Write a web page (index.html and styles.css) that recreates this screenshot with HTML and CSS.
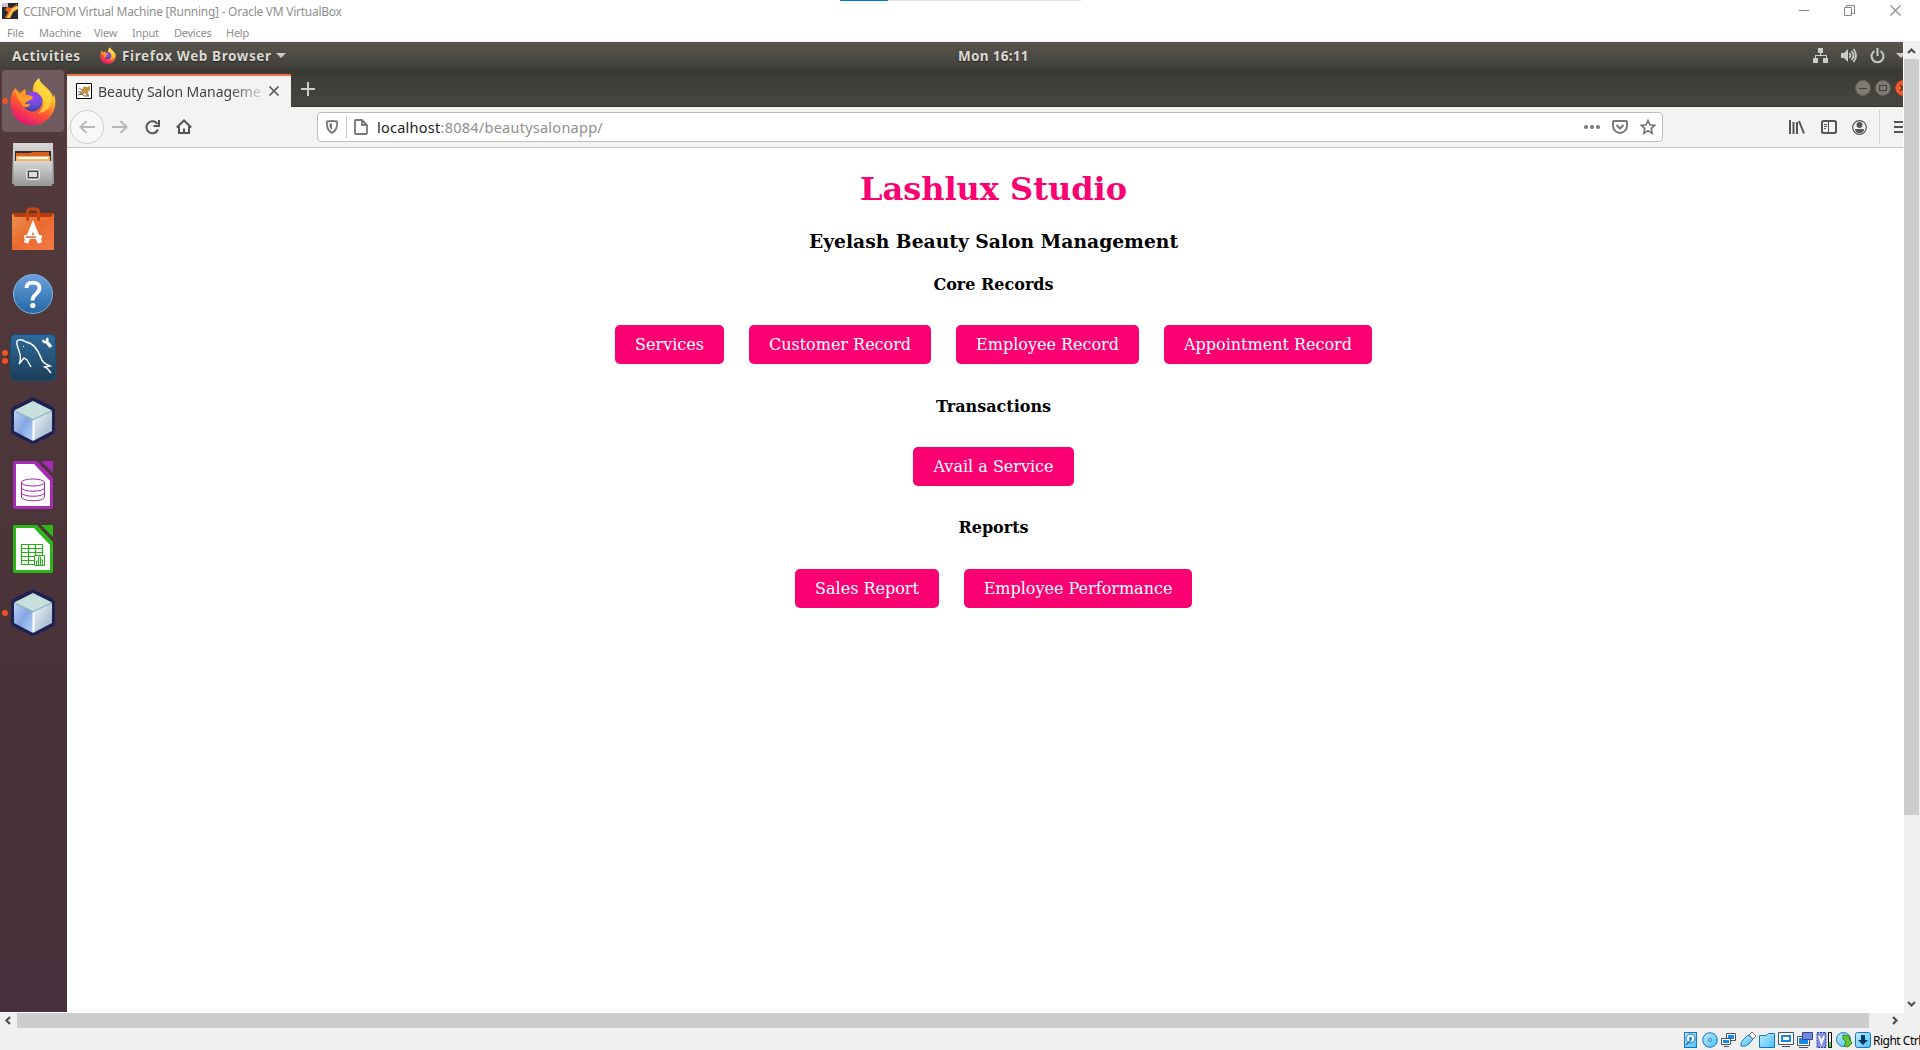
FILE: index.html
```html
<!DOCTYPE html>
<html lang="en">
<head>
<meta charset="utf-8">
<title>CCINFOM Virtual Machine</title>
<link rel="stylesheet" href="styles.css">
</head>
<body>
<svg class="defs" width="0" height="0" aria-hidden="true">
  <defs>
    <linearGradient id="fire" x1="0.8" y1="0" x2="0.3" y2="1"><stop offset="0" stop-color="#fff44f"/><stop offset=".35" stop-color="#ffb52a"/><stop offset=".62" stop-color="#ff5a2e"/><stop offset="1" stop-color="#e4107a"/></linearGradient>
    <radialGradient id="globe" cx=".6" cy=".25" r=".8"><stop offset="0" stop-color="#a13df0"/><stop offset=".5" stop-color="#6e50d8"/><stop offset="1" stop-color="#3d3aa0"/></radialGradient>
    <linearGradient id="steel" x1="0" y1="0" x2="0" y2="1"><stop offset="0" stop-color="#d8d8d8"/><stop offset="1" stop-color="#979797"/></linearGradient>
    <linearGradient id="bag" x1="0" y1="0" x2="1" y2="1"><stop offset="0" stop-color="#e8934f"/><stop offset=".5" stop-color="#ec6a2f"/><stop offset="1" stop-color="#f07c45"/></linearGradient>
    <linearGradient id="help" x1="0" y1="0" x2="0" y2="1"><stop offset="0" stop-color="#6ca0dc"/><stop offset="1" stop-color="#2268a6"/></linearGradient>
    <linearGradient id="sql" x1="0" y1="0" x2="0" y2="1"><stop offset="0" stop-color="#2f6a9c"/><stop offset="1" stop-color="#1c3e58"/></linearGradient>
    <linearGradient id="cubeL" x1="0" y1="0" x2="1" y2="1"><stop offset="0" stop-color="#bcd2f4"/><stop offset=".5" stop-color="#86a6e2"/><stop offset="1" stop-color="#b4d6fa"/></linearGradient>
    <linearGradient id="cubeR" x1="0" y1="0" x2="1" y2="1"><stop offset="0" stop-color="#f2f8fc"/><stop offset=".5" stop-color="#c3d2dc"/><stop offset="1" stop-color="#97aed0"/></linearGradient>
    <linearGradient id="aqua" x1="0" y1="0" x2="1" y2="1"><stop offset="0" stop-color="#c4ecff"/><stop offset="1" stop-color="#48c0fa"/></linearGradient>
    <symbol id="firefox" viewBox="0 0 46 47">
      <path fill="url(#fire)" d="M5 10l5 5 5-4 1 5 7-1c-1-6 1-11 6-15 1 7 12 10 14 19 1-1 1-2 1-3 3 9 1 17-4 23-9 11-27 11-35 0C-1 31-1 17 5 10z"/>
      <circle cx="22.500" cy="23.500" r="10" fill="url(#globe)"/>
      <path fill="#ff9a26" d="M5 11l5 5 5-4 1 5c6 0 8 2 6 4-3 2-6 2-7 5 2 0 4-1 5 1-3 4-8 2-9-2-3-3-5-7-6-14z"/>
      <path fill="#ffd83c" opacity=".8" d="M29 1c-6 9-3 12 2 17 5 6 2 14-3 17 9 0 15-8 13-17-2-6-9-9-12-17z"/>
    </symbol>
    <symbol id="cube" viewBox="0 0 46 48">
      <path fill="#202153" d="M20 1.500q3-2 6 0l16 8q3 1 3 4v20q0 3-3 4.500l-16 8q-3 2-6 0l-16-8q-3-1.500-3-4.500v-20q0-3 3-4z"/>
      <path fill="#c7e0dc" d="M23 4l19 9.500L23 23 4 13.500z"/>
      <path fill="url(#cubeL)" d="M4 14l19 9v21L4 34z"/>
      <path fill="url(#cubeR)" d="M42 14l-19 9v21l19-10z"/>
      <path fill="none" stroke="#8fc0cc" stroke-width="1.200" d="M5 14l18 8.500L41 14"/>
      <path stroke="#fff" stroke-width="2" d="M23.500 24v19"/>
    </symbol>
    <symbol id="file" viewBox="0 0 40 48"><path fill="currentColor" d="M1 0h23l16 17v29q0 2-2 2H2q-2 0-2-2V1z"/><path fill="#fff" d="M3 3h18l16 17v25H3z"/><path fill="currentColor" d="M28 0h12v12z"/></symbol>
  </defs>
</svg>

<header class="titlebar">
  <svg class="vm-logo" viewBox="0 0 16 16"><path fill="#2a2a35" d="M0 0h16v16H0z"/><path fill="#c5cad2" d="M0 0h6v4H0z"/><path fill="#e96b17" d="M5 4l5 1 5-4v4l-5 4-3 6H3l3-6-3-2z"/><path fill="#ffc451" d="M10 5l6-2v3l-5 3-3 6H5l3-6z"/></svg>
  <span class="title">CCINFOM Virtual Machine [Running] - Oracle VM VirtualBox</span>
  <div class="win-buttons">
    <svg width="10" height="11"><path d="M0 5.500h10" stroke="#888"/></svg>
    <svg width="11" height="11" fill="none" stroke="#888"><path d="M.5 2.500h7v8h-7zM2.500 2.500v-2h8v8h-3"/></svg>
    <svg width="11" height="11" stroke="#888" stroke-width="1.100"><path d="M.5.500l10 10M10.500.500l-10 10"/></svg>
  </div>
  <div class="progress"></div>
</header>
<nav class="menubar">
  <span class="m-file">File</span><span class="m-machine">Machine</span><span class="m-view">View</span><span class="m-input">Input</span><span class="m-devices">Devices</span><span>Help</span>
</nav>

<div class="viewport">
  <div class="guest">
    <div class="topbar">
      <span class="activities">Activities</span>
      <svg class="ff-small"><use href="#firefox"/></svg>
      <span class="app">Firefox Web Browser</span>
      <svg class="caret" viewBox="0 0 10 5"><path fill="#ccc" d="M0 0h10L5 5z"/></svg>
      <span class="clock">Mon 16:11</span>
      <div class="tray">
        <svg width="16" height="16" fill="#ccc"><path d="M5 0h5v5H5zM7 5h1v3H7zM2 7h12v1H2zM2 7h1v3H2zM13 7h1v3h-1zM0 10h5v5H0zM10 10h5v5h-5z"/></svg>
        <svg width="17" height="16"><path fill="#ccc" d="M0 5h3l4-4v13l-4-4H0z"/><path fill="none" stroke="#ccc" stroke-width="1.700" d="M8.500 5q2 2.500 0 5M10.500 3q4 4.500 0 9M12.500 1q5 6.500 0 13"/></svg>
        <svg width="16" height="16" fill="none" stroke="#ccc" stroke-width="2"><path d="M4.500 3a6 6 0 1 0 6 0M7.500 0v8"/></svg>
        <svg width="10" height="6"><path fill="#ccc" d="M0 0h10L5 5z"/></svg>
      </div>
    </div>
    <div class="desktop">
      <aside class="dock">
        <div class="app-tile active"><i class="dots one"></i><svg width="46" height="47"><use href="#firefox"/></svg></div>
        <div class="app-tile"><svg width="42" height="44" viewBox="0 0 42 44"><path fill="url(#steel)" d="M1 0h40v5l1 36H0L1 5z"/><path fill="#332b27" d="M3 8h36v10H3z"/><path fill="#d85f22" d="M4 10h15l1-1h17v9H4z"/><path fill="#ffb45c" d="M4 13h34v5H4z"/><path fill="#fff" d="M6 14h30v2H6z"/><path fill="url(#steel)" d="M2 18h38v25H2z"/><path fill="none" stroke="#d5d5d5" d="M3 18.500h36"/><rect x="14.500" y="26.500" width="13" height="10" rx="2" fill="#9a9a9a" stroke="#eee"/><path fill="#ddd" stroke="#444" d="M16.500 28.500h9v6h-9z"/></svg></div>
        <div class="app-tile"><svg width="42" height="44" viewBox="0 0 42 44"><path fill="#b73b0d" d="M1 6h40v6H1z"/><path fill="url(#bag)" d="M0 6l3 4h36l3-4v37H0z"/><path fill="none" stroke="#c84512" stroke-width="3" d="M15.500 14V5q0-3 3-3h5q3 0 3 3v9"/><path fill="none" stroke="#fff" stroke-width="4.500" d="M14 36l7-17 7 17"/><rect x="12" y="28" width="18" height="4" rx="1" fill="#fff"/><path fill="#eb6128" d="M13.500 29.300H24v1.500H13.500z"/></svg></div>
        <div class="app-tile help"><svg width="42" height="42"><circle cx="21" cy="21" r="19.500" fill="url(#help)" stroke="#7cb3e6"/><path fill="none" stroke="#fff" stroke-width="3.800" d="M14.500 15q0-5 6-5.300 7-.2 7 5.300 0 3.300-4 6.500-3 2.500-3 6"/><circle cx="20.800" cy="32.500" r="2.600" fill="#fff"/></svg></div>
        <div class="app-tile"><i class="dots two"></i><svg width="46" height="47"><rect x=".5" y=".5" width="45" height="46" rx="5" fill="url(#sql)" stroke="#1c4d76"/><path fill="none" stroke="#fff" stroke-width="1.400" d="M21 33l-4-7-3-2-5 6c2-4 2-8 0-13-1-4-3-7-2-10 2-2 6-1 9 1 7 1 12 8 15 16 1 4 4 6 9 8l-5 1c3 1 4 4 6 6"/><path d="M13.500 12v1" stroke="#fff"/><path stroke="#fff" stroke-width="3.500" d="M36 7l5 6"/><path fill="none" stroke="#fff" stroke-width="2.400" d="M33 6q1 3 3 2 2-1 1-4"/></svg></div>
        <div class="app-tile"><svg width="46" height="48"><use href="#cube"/></svg></div>
        <div class="app-tile base"><svg width="40" height="48"><use href="#file"/><g fill="none" stroke="#a02bb0"><ellipse cx="20" cy="21.500" rx="11.500" ry="3.500"/><path d="M8.500 21.500V36c0 5 23 5 23 0V21.500M8.500 26.500c0 5 23 5 23 0M8.500 31.500c0 5 23 5 23 0"/></g></svg></div>
        <div class="app-tile calc"><svg width="40" height="48"><use href="#file"/><path fill="none" stroke="#2aaf1a" stroke-width="1.200" d="M8.500 19.500h21v20h-21zM8.500 23.500h21M8.500 27.500h21M8.500 31.500h21M8.500 35.500h21M15.500 19.500v20M22.500 19.500v20"/><path fill="#fff" stroke="#2aaf1a" d="M21.500 30.500h10v10h-10z"/><path fill="none" stroke="#2aaf1a" d="M23.500 40v-4h2v4v-8h2v8v-5h2v5"/></svg></div>
        <div class="app-tile"><i class="dots one"></i><svg width="46" height="48"><use href="#cube"/></svg></div>
      </aside>
      <section class="browser">
        <div class="tabstrip">
          <div class="tab">
            <svg class="favicon" width="16" height="16"><path fill="#fff" stroke="#000" d="M.5.500h15v15H.5z"/><path fill="#c4913f" d="M8 3l2 1h2l2-1v4l-2 2 1 4h-2l-2-3-3 2H3l3-5z"/><path stroke="#666" fill="none" d="M2 12l4-1 2 2h5M3 5l3 2M2 9h3"/></svg>
            <span class="tab-title">Beauty Salon Manageme</span>
            <svg width="10" height="10" stroke="#555" stroke-width="1.600"><path d="M.5.500l9 9M9.500.500l-9 9"/></svg>
          </div>
          <svg class="new-tab" width="14" height="14"><path stroke="#ccc" stroke-width="2" d="M7 0v14M0 7h14"/></svg>
          <div class="ctl">
            <svg width="16" height="16"><circle cx="8" cy="8" r="7.500" fill="#7d7b74"  stroke="#64625b"/><path stroke="#3c3b37" d="M4 8.500h8"/></svg>
            <svg width="16" height="16"><circle cx="8" cy="8" r="7.500" fill="#7d7b74" stroke="#64625b"/><path fill="none" stroke="#3c3b37" d="M4.500 5.500h7v5h-7z"/></svg>
            <svg width="16" height="16"><circle cx="8" cy="8" r="7.500" fill="#f05d33" stroke="#c9431d"/><path stroke="#5b2414" stroke-width="1.300" d="M5 5l6 6M11 5l-6 6"/></svg>
          </div>
        </div>
        <div class="toolbar">
          <span class="back"><svg width="16" height="14" fill="none" stroke="#b9b8b7" stroke-width="2"><path d="M16 7H1M7.500 1L1.500 7l6 6"/></svg></span>
          <svg class="fwd" width="16" height="14" fill="none" stroke="#b9b8b7" stroke-width="2"><path d="M0 7h15M8.500 1l6 6-6 6"/></svg>
          <svg class="reload" width="16" height="15" fill="none" stroke="#555" stroke-width="2"><path d="M12.500 4A6 6 0 1 0 13 9.500M8.500 6h5.500V0"/></svg>
          <svg class="home" width="16" height="16" fill="none" stroke="#555" stroke-width="2"><path d="M.8 8.500L8 1.500l7.200 7M3 7.500V14h10V7.500M8 14.500v-5"/></svg>
          <div class="urlbar">
            <svg width="12" height="14"><path fill="none" stroke="#777" stroke-width="1.800" d="M1 1.500q5-1 10 0 1 8-5 11.500-6-3.500-5-11.500z"/><path fill="#777" d="M3.500 3.500H6V10Q3 8 3.500 3.500z"/></svg>
            <i class="sep"></i>
            <svg width="14" height="16"><path fill="none" stroke="#777" stroke-width="1.800" d="M1 2q0-1 1-1h6l5 5v8q0 1-1 1H2q-1 0-1-1zM8 1v5h5"/></svg>
            <span class="url"><b>localhost</b>:8084/beautysalonapp/</span>
            <svg class="more" width="16" height="4" fill="#777"><circle cx="2" cy="2" r="2"/><circle cx="8" cy="2" r="2"/><circle cx="14" cy="2" r="2"/></svg>
            <svg class="pocket" width="16" height="14" fill="none" stroke="#777" stroke-width="2"><path d="M2 1h12q1 0 1 1v4q-.5 6-7 7-6.500-1-7-7V2q0-1 1-1zM4.500 5L8 8.500 11.500 5"/></svg>
            <svg class="star" width="16" height="16" fill="none" stroke="#777" stroke-width="1.700"><path d="M8 1.500l2 4.300 4.700.5-3.500 3.200 1 4.700L8 11.800l-4.200 2.400 1-4.700L1.300 6.300 6 5.800z"/></svg>
          </div>
          <div class="tools">
            <svg width="16" height="14" stroke="#555" stroke-width="2"><path d="M1 0v14M4.500 2v12M8 2v12M10 1l5 12.500"/></svg>
            <svg width="16" height="14" fill="none" stroke="#555"><rect x="1" y="1" width="14" height="12" rx="1.500" stroke-width="2"/><path d="M7.500 2v10M3 4.500h3M3 6.500h3M3 8.500h2"/></svg>
            <svg width="15" height="15"><circle cx="7.500" cy="7.500" r="6.800" fill="none" stroke="#555" stroke-width="1.200"/><circle cx="7.500" cy="5" r="3" fill="#555"/><path fill="#555" d="M3 9h9q0 4-4.500 4T3 9z"/></svg>
            <i class="divider"></i>
            <svg width="16" height="12" stroke="#555" stroke-width="2"><path d="M0 1h14M0 6h14M0 11h14"/></svg>
          </div>
        </div>
        <main class="page">
          <h1>Lashlux Studio</h1>
          <h3>Eyelash Beauty Salon Management</h3>
          <h4>Core Records</h4>
          <div class="row"><a class="btn w-services">Services</a><a class="btn w-customer">Customer Record</a><a class="btn w-employee">Employee Record</a><a class="btn w-appointment">Appointment Record</a></div>
          <h4>Transactions</h4>
          <div class="row middle"><a class="btn w-avail">Avail a Service</a></div>
          <h4 class="last">Reports</h4>
          <div class="row"><a class="btn w-sales">Sales Report</a><a class="btn w-performance">Employee Performance</a></div>
        </main>
      </section>
    </div>
  </div>
  <div class="vscroll">
    <svg width="15" height="17" fill="none" stroke="#505050" stroke-width="2.200"><path d="M4 11l3.500-3.500L11 11"/></svg>
    <div class="vthumb"></div>
    <svg class="down" width="15" height="17" fill="none" stroke="#505050" stroke-width="2.200"><path d="M4 6l3.500 3.500L11 6"/></svg>
  </div>
</div>
<div class="hscroll">
  <svg width="17" height="15" fill="none" stroke="#505050" stroke-width="2.200"><path d="M10 4L6.500 7.500 10 11"/></svg>
  <div class="hthumb"></div>
  <svg class="right" width="17" height="15" fill="none" stroke="#505050" stroke-width="2.200"><path d="M7 4l3.500 3.500L7 11"/></svg>
</div>
<footer class="statusbar">
  <svg width="16" height="16"><rect x="1.500" y=".5" width="12" height="15" fill="url(#aqua)" stroke="#1675c6"/><circle cx="7.500" cy="6.500" r="4.500" fill="#e9f8ff" stroke="#1675c6"/><circle cx="7.500" cy="6.500" r="1.500" fill="#1675c6"/><path stroke="#1675c6" stroke-width="1.500" d="M3 13l5-5"/></svg>
  <svg width="16" height="16"><circle cx="8" cy="8" r="7.300" fill="url(#aqua)" stroke="#1675c6"/><circle cx="8" cy="8" r="1.500" fill="#fff" stroke="#1675c6"/></svg>
  <svg width="16" height="16" stroke="#445064"><path fill="#fff" d="M5.500 1.500h9v7h-9z"/><path fill="#1688e8" stroke="none" d="M7 3h6v4H7z"/><path fill="#fff" d="M.5 6.500h9v6h-9zM3 14.500h5"/><path fill="#1688e8" stroke="none" d="M2 8h6v3H2z"/></svg>
  <svg width="16" height="16"><path fill="url(#aqua)" stroke="#1675c6" d="M1 14q-1-4 3-7l4-4 5 4-4 5q-3 3-8 2z"/><path fill="#fff" stroke="#777" d="M9 3l3-3 4 4-3 3z"/></svg>
  <svg width="16" height="16"><path fill="url(#aqua)" stroke="#1675c6" d="M.5 15.500v-12h7l2-2h6v14z"/></svg>
  <svg width="16" height="16"><path fill="#fff" stroke="#445064" d="M.5.500h15v12h-15zM4 14.500h8"/><path fill="#fff" stroke="#1688e8" stroke-width="2" d="M4 4h8v5H4z"/></svg>
  <svg width="16" height="16"><path fill="#fff" stroke="#445064" d="M.5 4.500h12v9H.500zM2 15.500h9"/><path fill="#1688e8" d="M2 6h9v6H2z"/><path fill="#7288dd" stroke="#3344a0" d="M5.500.5h10v7h-10z"/></svg>
  <svg width="17" height="16"><path fill="#7f91e2" stroke="#303c9a" stroke-dasharray="2 1" d="M1 .5h9v15H1z"/><path fill="none" stroke="#fff" stroke-width="2" d="M3 4l2.500 7L8 4"/><path stroke="#000" fill="#fff" d="M12.500.5h3v15h-3z"/><path fill="#3fe41a" d="M13 10h2v5h-2z"/></svg>
  <svg width="16" height="16"><circle cx="7.500" cy="7.500" r="7" fill="url(#aqua)" stroke="#1675c6"/><path fill="#69c431" stroke="#2a8922" d="M7 3l6 1 1 4 2 3-4 4-4-1 2-4-3-3z"/></svg>
  <svg width="16" height="16"><rect x=".5" y=".5" width="15" height="15" rx="2" fill="url(#aqua)" stroke="#1675c6"/><path fill="#073b63" d="M6 3h4v5h3l-5 5-5-5h3z"/></svg>
  <span class="hostkey">Right Ctrl</span>
</footer>
</body>
</html>
```
FILE: styles.css
```css
* { box-sizing: border-box; }
body { margin: 0; width: 1920px; height: 1050px; overflow: hidden; display: flex; flex-direction: column; background: linear-gradient(#fff 1013px, #f0f0f0 1013px); font-family: "Noto Sans", sans-serif; }
svg { display: block; flex: none; overflow: visible; }
.defs { position: absolute; }
span { white-space: nowrap; }

.titlebar { position: relative; height: 24px; flex: none; display: flex; align-items: center; padding: 0 19px 0 2px; color: #8f8f8f; font-size: 12px; }
.vm-logo { width: 16px; height: 16px; margin: 0 5px 2px 0; }
.title { font-size: 12px; letter-spacing: -.26px; padding-bottom: 1px; }
.win-buttons { margin-left: auto; display: flex; gap: 35px; align-items: center; padding-bottom: 4px; }
.progress { position: absolute; left: 840px; top: 0; width: 241px; height: 1px; background: linear-gradient(90deg, #0078d7 48px, #e2e2e2 48px); }
.menubar { height: 18px; flex: none; display: flex; align-items: center; padding: 0 0 1px 7px; border-bottom: 1px solid #f0f0f0; color: #8f8f8f; font-size: 11px; letter-spacing: -.25px; }
.m-file { width: 32px; } .m-machine { width: 55px; } .m-view { width: 38px; } .m-input { width: 42px; } .m-devices { width: 52px; }

.viewport { height: 971px; flex: none; display: flex; }
.guest { width: 1903px; height: 970px; overflow: hidden; flex: none; display: flex; flex-direction: column; }
.topbar { height: 27px; flex: none; display: flex; align-items: center; padding-left: 12px; background: linear-gradient(#59564e, #403f3a); color: #dcd9d3; font-size: 13.500px; font-weight: 700; text-shadow: 0 1px 1px #222; }
.activities { width: 88px; letter-spacing: .6px; }
.ff-small { width: 16px; height: 17px; margin: 0 6px 1px 0; }
.app { width: 154px; letter-spacing: .6px; }
.caret { width: 10px; height: 5px; }
.clock { width: 90px; margin-left: 672px; letter-spacing: .3px; }
.tray { margin-left: auto; display: flex; align-items: center; gap: 12px; margin-right: -3px; }
.tray svg:last-child { margin-left: -2px; }

.desktop { width: 1920px; flex: 1; display: flex; min-height: 0; }
.dock { width: 67px; flex: none; display: flex; flex-direction: column; gap: 2px; padding: 1px 2px; background: linear-gradient(#543a3c, #4b3539 50%, #45303b); }
.app-tile { position: relative; width: 62px; height: 62px; flex: none; display: flex; align-items: center; justify-content: center; border-radius: 4px; }
.active { background: #705c5e; }
.help { padding-top: 2px; }
.base { color: #a52bb5; } .calc { color: #2db51c; }
.dots { position: absolute; left: 0; top: 28px; width: 6px; height: 6px; border-radius: 50%; background: #e95420; }
.two { top: 24px; box-shadow: 0 8px #e95420; }

.browser { width: 1853px; flex: none; display: flex; flex-direction: column; background: #fff; }
.tabstrip { height: 38px; flex: none; display: flex; align-items: center; background: linear-gradient(#3a3934, #474640); border-bottom: 1px solid #33322e; }
.tab { width: 224px; height: 33px; flex: none; display: flex; align-items: center; padding: 0 12px 1px 9px; margin: 5px 0 -1px; background: #f4f3f2; border-top: 2px solid #f4724a; }
.tab-title { width: 165px; margin: 0 6px 0 6px; font-size: 14px; letter-spacing: -.05px; color: #444; -webkit-mask-image: linear-gradient(90deg, #000 132px, transparent 170px); mask-image: linear-gradient(90deg, #000 132px, transparent 170px); }
.new-tab { margin: 3px 0 0 10px; }
.ctl { margin-left: auto; display: flex; gap: 4px; margin-right: 9px; }
.toolbar { height: 41px; flex: none; display: flex; align-items: center; padding-left: 3px; background: #f4f3f2; border-bottom: 1px solid #c9c7c5; }
.back { width: 34px; height: 34px; border: 1px solid #cfcecd; border-radius: 50%; display: flex; align-items: center; justify-content: center; background: #f9f8f8; }
.fwd { margin-left: 8px; } .reload { margin-left: 17px; } .home { margin-left: 15px; }
.urlbar { width: 1346px; height: 30px; margin-left: 125px; flex: none; display: flex; align-items: center; padding-left: 8px; background: #fff; border: 1px solid #bfbcb9; border-radius: 4px; }
.sep { width: 1px; height: 22px; background: #c8c7c6; margin: 0 7px 0 8px; }
.url { margin-left: 9px; color: #8f8f8f; font-size: 14.500px; letter-spacing: .25px; }
.url b { font-weight: 400; color: #222; }
.more { margin-left: auto; } .pocket { margin-left: 12px; } .star { margin: 0 6px 0 12px; }
.tools { display: flex; align-items: center; margin-left: 126px; gap: 15.500px; }
.divider { width: 1px; height: 34px; background: #d5d4d3; margin-left: -4px; margin-right: -1px; }

.page { flex: 1; display: flex; flex-direction: column; align-items: center; padding-top: 22px; font-family: "DejaVu Serif", serif; }
h1, h3, h4 { margin: 0; color: #000; white-space: nowrap; }
h1 { height: 58px; line-height: 38px; font-size: 32px; color: #fa0073; }
h3 { height: 46px; line-height: 27px; font-size: 18.720px; }
h4 { height: 51px; line-height: 22px; font-size: 16px; }
.last { height: 52px; }
.row { display: flex; gap: 25px; margin-bottom: 32px; }
.middle { margin-bottom: 31px; }
.btn { height: 39px; display: flex; align-items: center; justify-content: center; background: #fa0073; color: #fff; font-size: 16px; border-radius: 5px; white-space: nowrap; }
.w-services { width: 109px; } .w-customer { width: 182px; } .w-employee { width: 183px; } .w-appointment { width: 208px; }
.w-avail { width: 161px; } .w-sales { width: 144px; } .w-performance { width: 228px; }

.vscroll { width: 16px; margin-left: 1px; display: flex; flex-direction: column; background: #f0f0f0; }
.vthumb { width: 15px; height: 756px; background: #cdcdcd; }
.down { margin-top: auto; }
.hscroll { height: 15px; flex: none; width: 1903px; display: flex; background: #f0f0f0; }
.hthumb { width: 1852px; background: #cdcdcd; }
.right { margin-left: auto; }
.statusbar { flex: 1; display: flex; align-items: center; gap: 3px; padding: 2px 0 0 1683px; color: #000; font-size: 12px; }
.hostkey { margin-left: -1px; letter-spacing: -.5px; }
```
